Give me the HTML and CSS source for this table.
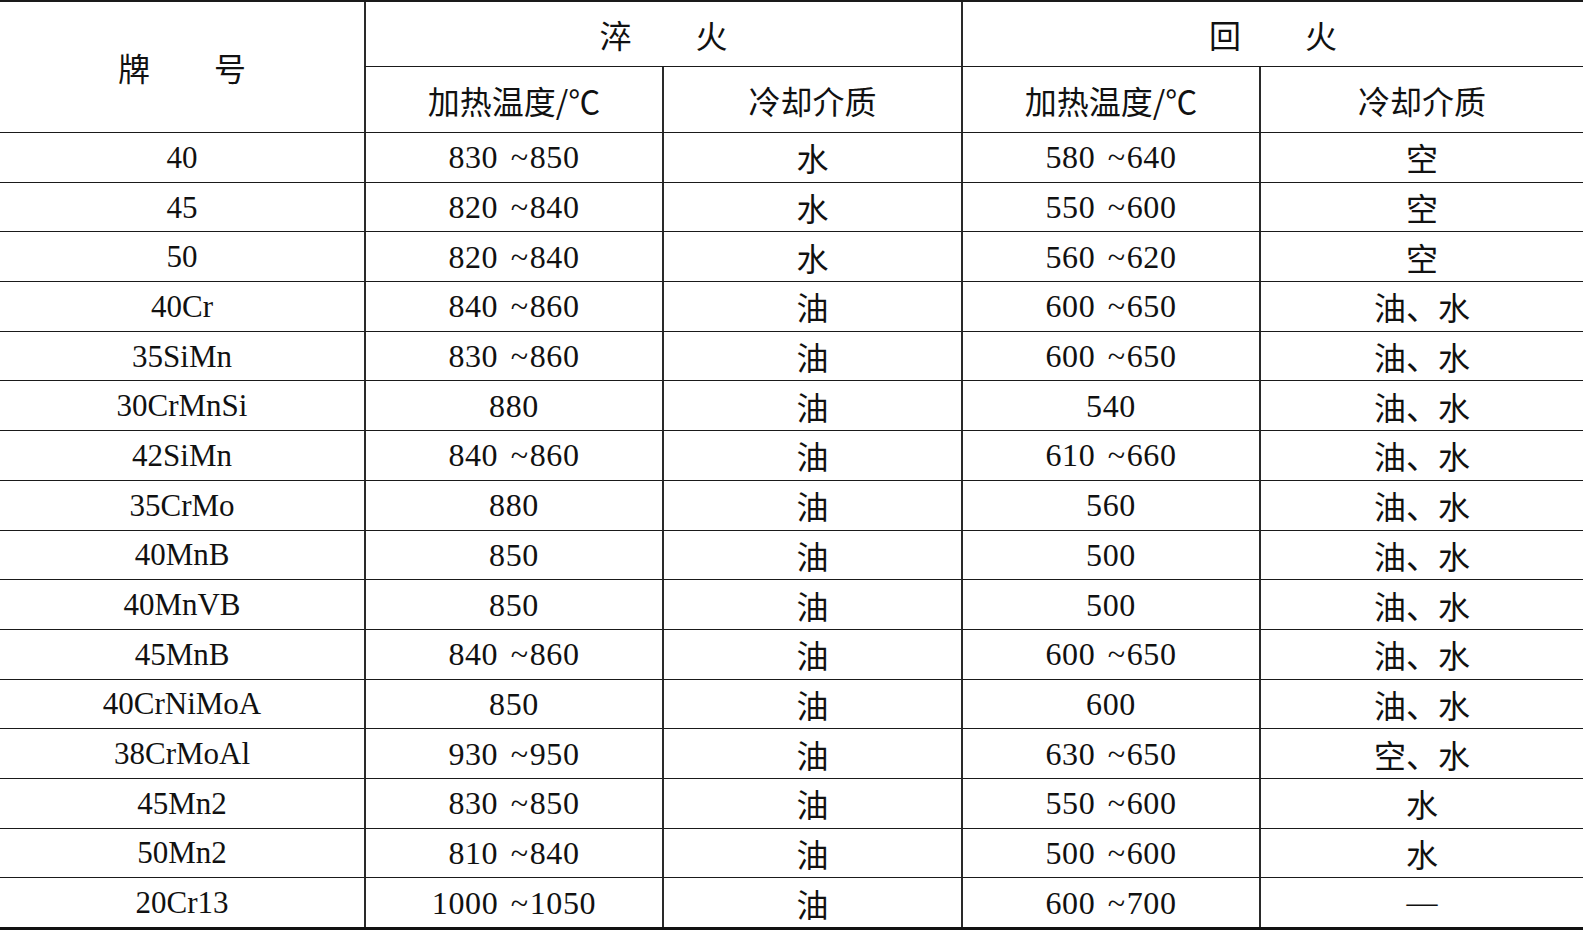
FILE: index.html
```html
<!DOCTYPE html>
<html lang="zh-CN">
<head>
<meta charset="utf-8">
<title>常用钢调质工艺</title>
<link rel="stylesheet" href="styles.css">
</head>
<body>
<table class="spec">
  <colgroup>
    <col class="c-grade">
    <col class="c-mid">
    <col class="c-mid2">
    <col class="c-mid">
    <col class="c-last">
  </colgroup>
  <thead>
    <tr class="h1">
      <th rowspan="2" class="first zh">牌　　号</th>
      <th colspan="2" class="zh">淬　　火</th>
      <th colspan="2" class="zh">回　　火</th>
    </tr>
    <tr class="h2">
      <th class="zh">加热温度/℃</th>
      <th class="zh">冷却介质</th>
      <th class="zh">加热温度/℃</th>
      <th class="zh">冷却介质</th>
    </tr>
  </thead>
  <tbody>
    <tr><td class="first">40</td><td class="num">830 <span class="t">~</span>850</td><td class="zh">水</td><td class="num">580 <span class="t">~</span>640</td><td class="zh">空</td></tr>
    <tr><td class="first">45</td><td class="num">820 <span class="t">~</span>840</td><td class="zh">水</td><td class="num">550 <span class="t">~</span>600</td><td class="zh">空</td></tr>
    <tr><td class="first">50</td><td class="num">820 <span class="t">~</span>840</td><td class="zh">水</td><td class="num">560 <span class="t">~</span>620</td><td class="zh">空</td></tr>
    <tr><td class="first">40Cr</td><td class="num">840 <span class="t">~</span>860</td><td class="zh">油</td><td class="num">600 <span class="t">~</span>650</td><td class="zh">油、水</td></tr>
    <tr><td class="first">35SiMn</td><td class="num">830 <span class="t">~</span>860</td><td class="zh">油</td><td class="num">600 <span class="t">~</span>650</td><td class="zh">油、水</td></tr>
    <tr><td class="first">30CrMnSi</td><td class="num">880</td><td class="zh">油</td><td class="num">540</td><td class="zh">油、水</td></tr>
    <tr><td class="first">42SiMn</td><td class="num">840 <span class="t">~</span>860</td><td class="zh">油</td><td class="num">610 <span class="t">~</span>660</td><td class="zh">油、水</td></tr>
    <tr><td class="first">35CrMo</td><td class="num">880</td><td class="zh">油</td><td class="num">560</td><td class="zh">油、水</td></tr>
    <tr><td class="first">40MnB</td><td class="num">850</td><td class="zh">油</td><td class="num">500</td><td class="zh">油、水</td></tr>
    <tr><td class="first">40MnVB</td><td class="num">850</td><td class="zh">油</td><td class="num">500</td><td class="zh">油、水</td></tr>
    <tr><td class="first">45MnB</td><td class="num">840 <span class="t">~</span>860</td><td class="zh">油</td><td class="num">600 <span class="t">~</span>650</td><td class="zh">油、水</td></tr>
    <tr><td class="first">40CrNiMoA</td><td class="num">850</td><td class="zh">油</td><td class="num">600</td><td class="zh">油、水</td></tr>
    <tr><td class="first">38CrMoAl</td><td class="num">930 <span class="t">~</span>950</td><td class="zh">油</td><td class="num">630 <span class="t">~</span>650</td><td class="zh">空、水</td></tr>
    <tr><td class="first">45Mn2</td><td class="num">830 <span class="t">~</span>850</td><td class="zh">油</td><td class="num">550 <span class="t">~</span>600</td><td class="zh">水</td></tr>
    <tr><td class="first">50Mn2</td><td class="num">810 <span class="t">~</span>840</td><td class="zh">油</td><td class="num">500 <span class="t">~</span>600</td><td class="zh">水</td></tr>
    <tr class="last"><td class="first">20Cr13</td><td class="num">1000 <span class="t">~</span>1050</td><td class="zh">油</td><td class="num">600 <span class="t">~</span>700</td><td>—</td></tr>
  </tbody>
</table>
</body>
</html>
```

FILE: styles.css
```css
html, body {
  margin: 0;
  padding: 0;
  background: #ffffff;
}

.spec {
  width: 1583px;
  table-layout: fixed;
  border-collapse: separate;
  border-spacing: 0;
  border-top: 2px solid #1a1a1a;
  border-bottom: 3px solid #111111;
  font-family: "Liberation Serif", "Noto Sans CJK SC", serif;
  font-size: 31px;
  color: #111111;
}

.c-grade { width: 364px; }
.c-mid { width: 298px; }
.c-mid2 { width: 299px; }
.c-last { width: 324px; }

.spec th,
.spec td {
  padding: 0;
  text-align: center;
  vertical-align: middle;
  font-weight: normal;
  border-bottom: 1px solid #1a1a1a;
  border-left: 2px solid #2a2a2a;
  white-space: nowrap;
  line-height: 1;
}

.spec .first {
  border-left: none;
}

.spec .last td {
  border-bottom: none;
}

.h1 th {
  height: 64px;
}

.h2 th {
  height: 65px;
}

.spec tbody td {
  height: 48.7px;
}

.num {
  font-size: 32px;
  letter-spacing: 0.6px;
}

.zh {
  font-family: "Noto Sans CJK SC", "Liberation Serif", sans-serif;
  font-weight: 300;
  font-size: 32px;
}

.t {
  margin-left: 4px;
  margin-right: 1px;
}
```
